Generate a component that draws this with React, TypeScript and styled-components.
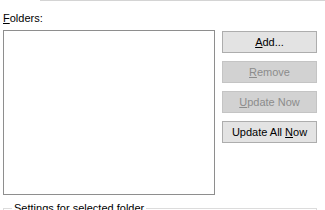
import React from "react";
import styled, { createGlobalStyle } from "styled-components";

const GlobalStyle = createGlobalStyle`
  html, body {
    margin: 0;
    padding: 0;
    background: #ffffff;
    overflow: hidden;
  }
  body {
    font-family: "Liberation Sans", Arial, sans-serif;
    font-size: 11px;
    color: #000000;
  }
`;

const Page = styled.div`
  width: 325px;
  height: 210px;
  padding: 0 8px 0 3px;
  box-sizing: border-box;
  display: flex;
  flex-direction: column;
`;

const TopStrip = styled.div`
  margin-left: 37px;
  margin-right: -8px;
  height: 3px;
  border-left: 1px solid #d4d4d4;
  border-bottom: 1px solid #d4d4d4;
  background: #f7f7f7;
`;

const Label = styled.div`
  margin-top: 11px;
  height: 13px;
  line-height: 13px;
`;

const Key = styled.span`
  text-decoration: underline;
  text-underline-offset: 1px;
`;

const Row = styled.div`
  display: flex;
  margin-top: 5px;
  gap: 7px;
`;

const ListBox = styled.div`
  width: 212px;
  height: 165px;
  box-sizing: border-box;
  border: 1px solid #8e8e8e;
  background: #ffffff;
`;

const ButtonColumn = styled.div`
  display: flex;
  flex-direction: column;
  gap: 8px;
  padding-top: 1px;
`;

const Button = styled.button<{ $disabled?: boolean }>`
  width: 95px;
  height: 22px;
  box-sizing: border-box;
  padding: 0;
  font-family: "Liberation Sans", Arial, sans-serif;
  font-size: 11px;
  border: 1px solid ${p => (p.$disabled ? "#c4c4c4" : "#adadad")};
  background: ${p => (p.$disabled ? "#d2d2d2" : "#e3e3e3")};
  color: ${p => (p.$disabled ? "#8c8c8c" : "#000000")};
  text-align: center;
`;

const GroupBox = styled.fieldset`
  margin: 7px 0 0 0;
  padding: 0 8px;
  border: 1px solid #dcdcdc;
  height: 40px;
`;

const Legend = styled.legend`
  padding: 0 2px;
  margin-left: 0;
  line-height: 13px;
  font-size: 11px;
`;

export default function App() {
  return (
    <>
      <GlobalStyle />
      <Page>
        <TopStrip />
        <Label>
          <Key>F</Key>olders:
        </Label>
        <Row>
          <ListBox />
          <ButtonColumn>
            <Button>
              <Key>A</Key>dd...
            </Button>
            <Button $disabled>
              <Key>R</Key>emove
            </Button>
            <Button $disabled>
              <Key>U</Key>pdate Now
            </Button>
            <Button>
              Update All <Key>N</Key>ow
            </Button>
          </ButtonColumn>
        </Row>
        <GroupBox>
          <Legend>Settings for selected folder</Legend>
        </GroupBox>
      </Page>
    </>
  );
}
